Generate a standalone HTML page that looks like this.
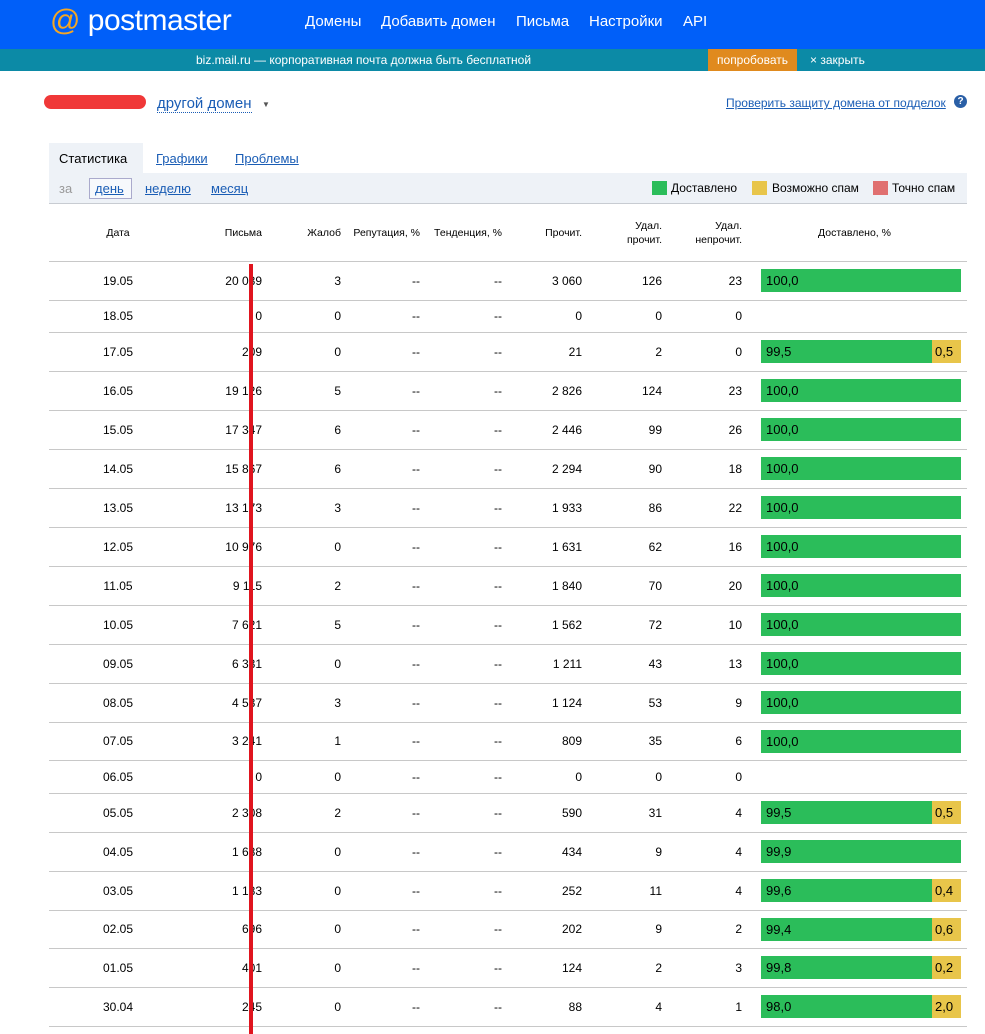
<!DOCTYPE html>
<html><head><meta charset="utf-8"><style>
*{margin:0;padding:0;box-sizing:border-box}
body{width:985px;height:1028px;overflow:hidden;background:#fff;font-family:"Liberation Sans",Arial,sans-serif;font-size:12px;color:#000;position:relative}
.hdr{position:absolute;left:0;top:0;width:985px;height:49px;background:#005ff9}
.logo{position:absolute;left:50px;top:4px;color:#fff;font-size:30px;letter-spacing:-0.5px}
.logo .at{color:#f5a623}
.nav{position:absolute;top:13px;color:#fff;font-size:15px}
.ban{position:absolute;left:0;top:49px;width:985px;height:22px;background:#0c8aa6;color:#fff;font-size:12px}
.a{color:#1a5db5;text-decoration:underline}
.abs{position:absolute}
table{position:absolute;left:49px;top:205px;width:918px;border-collapse:collapse}
td{border-bottom:1px solid #c8c8c8;text-align:right;font-size:12px;padding:0}
th{font-weight:normal;font-size:10.5px;text-align:right;height:56px;border-bottom:1px solid #c8c8c8;line-height:14px}
td.d,th.d{text-align:center}
.bar{display:flex;height:23px;margin-left:19px;width:200px;font-size:13px;line-height:23px;text-align:left}
.g{background:#2bbd5a;padding-left:5px;flex:1}
.y{background:#e8c54a;width:29px;padding-left:3px}
</style></head><body>
<div class="hdr">
<div class="logo"><span class="at">@</span> postmaster</div>
<span class="nav" style="left:305px">Домены</span>
<span class="nav" style="left:381px">Добавить домен</span>
<span class="nav" style="left:516px">Письма</span>
<span class="nav" style="left:589px">Настройки</span>
<span class="nav" style="left:683px">API</span>
</div>
<div class="ban">
<span class="abs" style="left:196px;top:4px">biz.mail.ru — корпоративная почта должна быть бесплатной</span>
<span class="abs" style="left:708px;top:0;width:89px;height:22px;background:#e08a1e;text-align:center;line-height:22px">попробовать</span>
<span class="abs" style="left:810px;top:4px">× закрыть</span>
</div>
<div class="abs" style="left:44px;top:95px;width:102px;height:14px;background:#e22;border-radius:8px;opacity:.9"></div>
<span class="abs a" style="left:157px;top:95px;font-size:15px;color:#1a5db5;text-decoration:none;border-bottom:1px dotted #1a5db5">другой домен</span><span class="abs" style="left:262px;top:100px;font-size:8px;color:#555">▼</span>
<span class="abs a" style="left:726px;top:96px;font-size:12px">Проверить защиту домена от подделок</span>
<span class="abs" style="left:954px;top:95px;width:13px;height:13px;border-radius:50%;background:#2a5fa6;color:#fff;font-size:10px;text-align:center;line-height:13px;font-weight:bold">?</span>
<div class="abs" style="left:49px;top:143px;width:94px;height:31px;background:#eef2f7"></div>
<div class="abs" style="left:49px;top:173px;width:918px;height:31px;background:#eef2f7;border-bottom:1px solid #c8ccd2"></div>
<span class="abs" style="left:59px;top:151px;font-size:13px">Статистика</span>
<span class="abs a" style="left:156px;top:151px;font-size:13px">Графики</span>
<span class="abs a" style="left:235px;top:151px;font-size:13px">Проблемы</span>
<span class="abs" style="left:59px;top:181px;font-size:13px;color:#999">за</span>
<span class="abs" style="left:89px;top:178px;width:43px;height:21px;border:1px solid #aac;background:#f7f9fc"></span>
<span class="abs a" style="left:95px;top:181px;font-size:13px">день</span>
<span class="abs a" style="left:145px;top:181px;font-size:13px">неделю</span>
<span class="abs a" style="left:211px;top:181px;font-size:13px">месяц</span>
<span class="abs" style="left:652px;top:181px;width:15px;height:14px;background:#2bbd5a"></span><span class="abs" style="left:671px;top:181px">Доставлено</span>
<span class="abs" style="left:752px;top:181px;width:15px;height:14px;background:#e8c54a"></span><span class="abs" style="left:772px;top:181px">Возможно спам</span>
<span class="abs" style="left:873px;top:181px;width:15px;height:14px;background:#e07070"></span><span class="abs" style="left:892px;top:181px">Точно спам</span>
<table>
<colgroup><col style="width:138px"><col style="width:75px"><col style="width:79px"><col style="width:79px"><col style="width:82px"><col style="width:80px"><col style="width:80px"><col style="width:80px"><col style="width:225px"></colgroup>
<tr><th class="d">Дата</th><th>Письма</th><th>Жалоб</th><th>Репутация, %</th><th>Тенденция, %</th><th>Прочит.</th><th>Удал.<br>прочит.</th><th>Удал.<br>непрочит.</th><th class="d">Доставлено, %</th></tr>
<tr style="height:39px"><td class="d">19.05</td><td>20 039</td><td>3</td><td>--</td><td>--</td><td>3 060</td><td>126</td><td>23</td><td><div class="bar"><div class="g">100,0</div></div></td></tr>
<tr style="height:32px"><td class="d">18.05</td><td>0</td><td>0</td><td>--</td><td>--</td><td>0</td><td>0</td><td>0</td><td></td></tr>
<tr style="height:39px"><td class="d">17.05</td><td>209</td><td>0</td><td>--</td><td>--</td><td>21</td><td>2</td><td>0</td><td><div class="bar"><div class="g">99,5</div><div class="y">0,5</div></div></td></tr>
<tr style="height:39px"><td class="d">16.05</td><td>19 126</td><td>5</td><td>--</td><td>--</td><td>2 826</td><td>124</td><td>23</td><td><div class="bar"><div class="g">100,0</div></div></td></tr>
<tr style="height:39px"><td class="d">15.05</td><td>17 347</td><td>6</td><td>--</td><td>--</td><td>2 446</td><td>99</td><td>26</td><td><div class="bar"><div class="g">100,0</div></div></td></tr>
<tr style="height:39px"><td class="d">14.05</td><td>15 867</td><td>6</td><td>--</td><td>--</td><td>2 294</td><td>90</td><td>18</td><td><div class="bar"><div class="g">100,0</div></div></td></tr>
<tr style="height:39px"><td class="d">13.05</td><td>13 173</td><td>3</td><td>--</td><td>--</td><td>1 933</td><td>86</td><td>22</td><td><div class="bar"><div class="g">100,0</div></div></td></tr>
<tr style="height:39px"><td class="d">12.05</td><td>10 976</td><td>0</td><td>--</td><td>--</td><td>1 631</td><td>62</td><td>16</td><td><div class="bar"><div class="g">100,0</div></div></td></tr>
<tr style="height:39px"><td class="d">11.05</td><td>9 115</td><td>2</td><td>--</td><td>--</td><td>1 840</td><td>70</td><td>20</td><td><div class="bar"><div class="g">100,0</div></div></td></tr>
<tr style="height:39px"><td class="d">10.05</td><td>7 621</td><td>5</td><td>--</td><td>--</td><td>1 562</td><td>72</td><td>10</td><td><div class="bar"><div class="g">100,0</div></div></td></tr>
<tr style="height:39px"><td class="d">09.05</td><td>6 331</td><td>0</td><td>--</td><td>--</td><td>1 211</td><td>43</td><td>13</td><td><div class="bar"><div class="g">100,0</div></div></td></tr>
<tr style="height:39px"><td class="d">08.05</td><td>4 537</td><td>3</td><td>--</td><td>--</td><td>1 124</td><td>53</td><td>9</td><td><div class="bar"><div class="g">100,0</div></div></td></tr>
<tr style="height:38px"><td class="d">07.05</td><td>3 241</td><td>1</td><td>--</td><td>--</td><td>809</td><td>35</td><td>6</td><td><div class="bar"><div class="g">100,0</div></div></td></tr>
<tr style="height:33px"><td class="d">06.05</td><td>0</td><td>0</td><td>--</td><td>--</td><td>0</td><td>0</td><td>0</td><td></td></tr>
<tr style="height:39px"><td class="d">05.05</td><td>2 308</td><td>2</td><td>--</td><td>--</td><td>590</td><td>31</td><td>4</td><td><div class="bar"><div class="g">99,5</div><div class="y">0,5</div></div></td></tr>
<tr style="height:39px"><td class="d">04.05</td><td>1 688</td><td>0</td><td>--</td><td>--</td><td>434</td><td>9</td><td>4</td><td><div class="bar"><div class="g">99,9</div></div></td></tr>
<tr style="height:39px"><td class="d">03.05</td><td>1 183</td><td>0</td><td>--</td><td>--</td><td>252</td><td>11</td><td>4</td><td><div class="bar"><div class="g">99,6</div><div class="y">0,4</div></div></td></tr>
<tr style="height:38px"><td class="d">02.05</td><td>696</td><td>0</td><td>--</td><td>--</td><td>202</td><td>9</td><td>2</td><td><div class="bar"><div class="g">99,4</div><div class="y">0,6</div></div></td></tr>
<tr style="height:39px"><td class="d">01.05</td><td>401</td><td>0</td><td>--</td><td>--</td><td>124</td><td>2</td><td>3</td><td><div class="bar"><div class="g">99,8</div><div class="y">0,2</div></div></td></tr>
<tr style="height:39px"><td class="d">30.04</td><td>245</td><td>0</td><td>--</td><td>--</td><td>88</td><td>4</td><td>1</td><td><div class="bar"><div class="g">98,0</div><div class="y">2,0</div></div></td></tr>
</table>
<div class="abs" style="left:249px;top:264px;width:4px;height:770px;background:#e0141e"></div>
</body></html>
